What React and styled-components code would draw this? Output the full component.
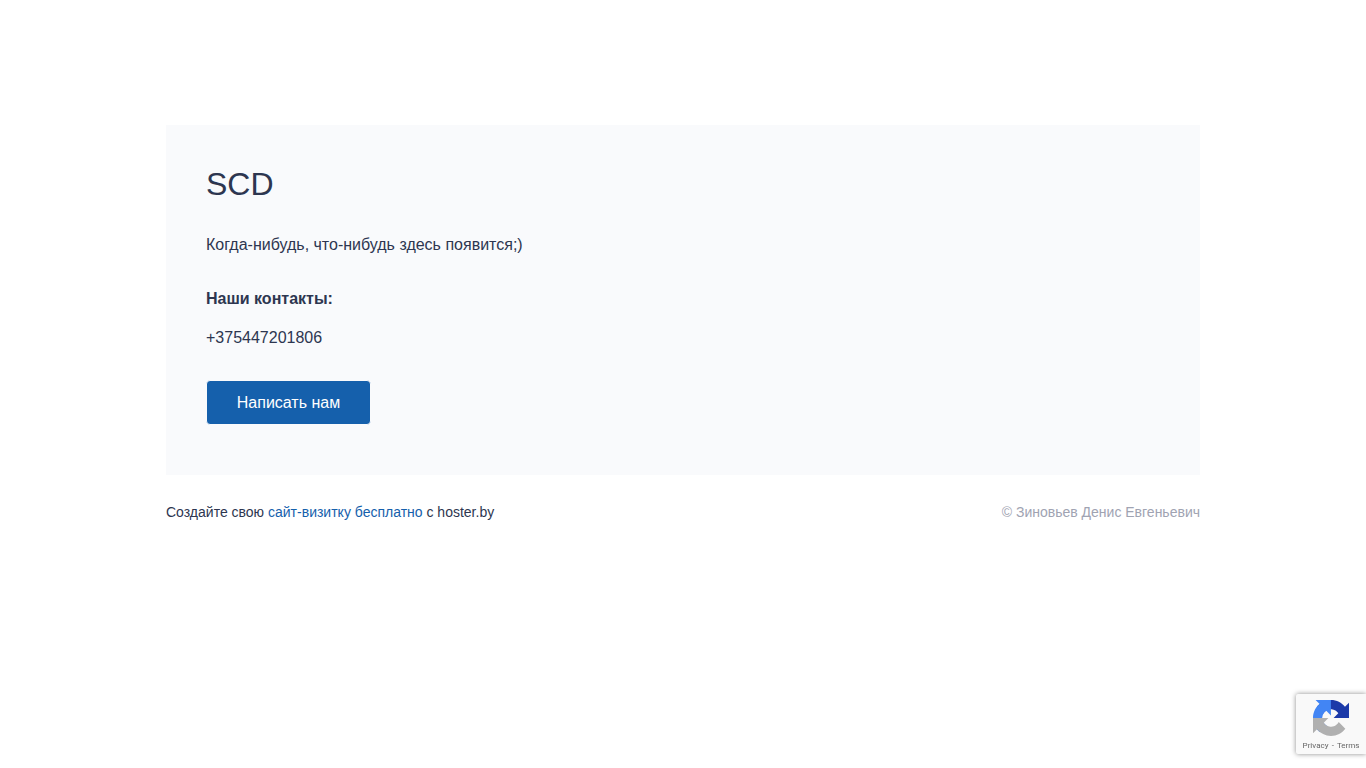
import React from 'react';
import styled, { createGlobalStyle } from 'styled-components';

const GlobalStyle = createGlobalStyle`
  html, body {
    margin: 0;
    padding: 0;
    background: #fff;
    font-family: "Liberation Sans", Arial, sans-serif;
    color: #2d3650;
  }
`;

const App = () => (
  <>
    <GlobalStyle />
    <Page>
      <Card>
        <Title>SCD</Title>
        <Intro>Когда-нибудь, что-нибудь здесь появится;)</Intro>
        <ContactsHeading>Наши контакты:</ContactsHeading>
        <Phone>+375447201806</Phone>
        <WriteButton type="button">Написать нам</WriteButton>
      </Card>
      <Footer>
        <FooterText>
          Создайте свою <FooterLink href="#">сайт-визитку бесплатно</FooterLink> с hoster.by
        </FooterText>
        <Copyright>© Зиновьев Денис Евгеньевич</Copyright>
      </Footer>
    </Page>
    <Badge>
      <BadgeLogo viewBox="0 0 64 64" aria-hidden="true">
        <path
          fill="#1c3aa9"
          d="M64 31.955l-.033-1.37V4.687l-7.16 7.16C50.948 4.674 42.033.093 32.05.093 21.63.093 12.374 5.067 6.524 12.77l11.734 11.858a15.55 15.55 0 0 1 4.754-5.334c2.05-1.6 4.952-2.906 8.968-2.906.485 0 .86.057 1.135.163 4.976.393 9.288 3.14 11.83 7.124l-8.307 8.307c10.52-.04 22.4-.066 27.966.002"
        />
        <path
          fill="#4285f4"
          d="M31.862.094l-1.37.033H4.594l7.16 7.16C4.58 13.094 0 22.008 0 31.992c0 10.42 4.974 19.676 12.677 25.526l11.86-11.733a15.55 15.55 0 0 1-5.334-4.754c-1.6-2.05-2.906-4.952-2.906-8.968 0-.485.057-.86.163-1.135.393-4.976 3.14-9.288 7.124-11.83l8.307 8.307c-.04-10.52-.066-22.4.002-27.966"
        />
        <path
          fill="#b0b0b0"
          d="M.001 31.953l.033 1.37v25.898l7.16-7.16c5.86 7.173 14.774 11.754 24.76 11.754 10.42 0 19.676-4.974 25.526-12.677L45.745 39.28a15.55 15.55 0 0 1-4.754 5.334c-2.05 1.6-4.952 2.906-8.968 2.906-.485 0-.86-.057-1.135-.163-4.976-.393-9.288-3.14-11.83-7.124l8.307-8.307c-10.52.04-22.4.066-27.966-.002"
        />
      </BadgeLogo>
      <BadgeLinks>Privacy - Terms</BadgeLinks>
    </Badge>
  </>
);

const Page = styled.div`
  width: 1034px;
  margin: 0 auto;
  padding-top: 125px;
`;

const Card = styled.section`
  box-sizing: border-box;
  height: 350px;
  padding: 40px;
  background: #f9fafc;
`;

const Title = styled.h1`
  margin: 0 0 30px;
  font-size: 32px;
  font-weight: 400;
  line-height: 38px;
`;

const Intro = styled.p`
  margin: 0 0 30px;
  font-size: 16px;
  line-height: 24px;
`;

const ContactsHeading = styled.p`
  margin: 0 0 15px;
  font-size: 16px;
  font-weight: 700;
  line-height: 24px;
`;

const Phone = styled.p`
  margin: 0 0 30px;
  font-size: 16px;
  line-height: 24px;
`;

const WriteButton = styled.button`
  display: block;
  box-sizing: border-box;
  width: 165px;
  height: 45px;
  padding: 0;
  border: 1px solid #f9fafc;
  border-radius: 4px;
  background: #1560ac;
  color: #fff;
  font-family: inherit;
  font-size: 16px;
`;

const Footer = styled.footer`
  display: flex;
  justify-content: space-between;
  align-items: center;
  padding-top: 29px;
  font-size: 14px;
  line-height: 17px;
`;

const FooterText = styled.span``;

const FooterLink = styled.a`
  color: #1560ac;
  text-decoration: none;
`;

const Copyright = styled.span`
  color: #a0a3b2;
`;

const Badge = styled.div`
  position: fixed;
  right: 0;
  bottom: 14px;
  box-sizing: border-box;
  width: 70px;
  height: 60px;
  display: flex;
  flex-direction: column;
  align-items: center;
  background: #f9f9f9;
  border-radius: 2px 0 0 2px;
  box-shadow: 0 0 5px rgba(128, 128, 128, 0.9);
`;

const BadgeLogo = styled.svg`
  width: 36px;
  height: 36px;
  margin-top: 6px;
`;

const BadgeLinks = styled.span`
  margin-top: 4px;
  font-family: Roboto, "Liberation Sans", sans-serif;
  font-size: 8px;
  word-spacing: 1.2px;
  line-height: 11px;
  white-space: nowrap;
  color: #666;
`;

export default App;
